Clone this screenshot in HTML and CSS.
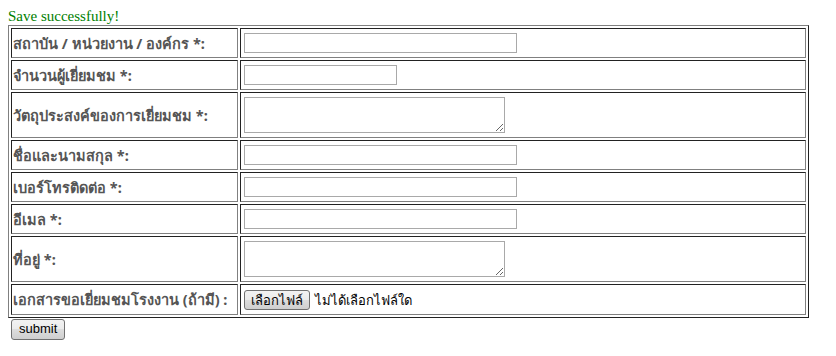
FILE: index.html
```html
<!DOCTYPE html>
<html lang="th">
<head>
  <meta charset="UTF-8">
  <title>ขอเยี่ยมชมโรงงาน</title>
  <link rel="stylesheet" href="styles.css">
</head>
<body>
  <div class="message">Save successfully!</div>
  <form class="visit-form">
    <table class="form-table">
      <tr>
        <td class="label">สถาบัน / หน่วยงาน / องค์กร *:</td>
        <td><input type="text" class="field-long"></td>
      </tr>
      <tr>
        <td class="label">จำนวนผู้เยี่ยมชม *:</td>
        <td><input type="text" class="field-short"></td>
      </tr>
      <tr>
        <td class="label">วัตถุประสงค์ของการเยี่ยมชม *:</td>
        <td><textarea class="field-area"></textarea></td>
      </tr>
      <tr>
        <td class="label">ชื่อและนามสกุล *:</td>
        <td><input type="text" class="field-long"></td>
      </tr>
      <tr>
        <td class="label">เบอร์โทรติดต่อ *:</td>
        <td><input type="text" class="field-long"></td>
      </tr>
      <tr>
        <td class="label">อีเมล *:</td>
        <td><input type="text" class="field-long"></td>
      </tr>
      <tr>
        <td class="label">ที่อยู่ *:</td>
        <td><textarea class="field-area"></textarea></td>
      </tr>
      <tr>
        <td class="label">เอกสารขอเยี่ยมชมโรงงาน (ถ้ามี) :</td>
        <td class="file-cell">
          <button type="button" class="btn">เลือกไฟล์</button>
          <span class="file-name">ไม่ได้เลือกไฟล์ใด</span>
        </td>
      </tr>
    </table>
    <button type="button" class="btn btn-submit">submit</button>
  </form>
</body>
</html>
```

FILE: styles.css
```css
body {
  margin: 8px;
  font-family: "Liberation Serif", "Times New Roman", serif;
  background-color: #FFF;
}

.message {
  color: #008000;
  font-size: 15px;
  line-height: 17px;
}

.form-table {
  width: 801px;
  border-collapse: separate;
  border-spacing: 2px;
  border: 1px solid;
  border-color: #808080 #222 #222 #808080;
}

.form-table td {
  border: 1px solid;
  border-color: #222 #808080 #808080 #222;
  padding: 4px 3px;
  vertical-align: middle;
  line-height: 18px;
}

.form-table td.label {
  width: 223px;
  padding: 4px 1px;
  font-family: Tahoma, "Noto Sans", "Liberation Sans", sans-serif;
  font-size: 14.5px;
  font-weight: bold;
  color: #555;
}

input[type="text"], textarea {
  display: block;
  margin: 0;
  padding: 0;
  border: 1px solid #A9A9A9;
  height: 20px;
  box-sizing: border-box;
  font-size: 13px;
}

.field-long {
  width: 273px;
}

.field-short {
  width: 153px;
}

.field-area {
  width: 261px;
  height: 36px !important;
  resize: both;
}

.file-cell {
  font-family: Tahoma, "Noto Sans", "Liberation Sans", sans-serif;
  font-size: 13px;
}

.btn {
  font-family: Tahoma, "Noto Sans", "Liberation Sans", sans-serif;
  font-size: 13px;
  line-height: 16px;
  height: 20px;
  padding: 0 6px;
  border: 1px solid #707070;
  border-radius: 3px;
  background: linear-gradient(#F2F2F2, #EBEBEB 50%, #DDD 50%, #CFCFCF);
  color: #000;
  cursor: pointer;
  vertical-align: middle;
}

.file-name {
  margin-left: 2px;
  vertical-align: middle;
}

.btn-submit {
  margin: 1px 0 0 3px;
  height: 21px;
  padding: 0 7px;
  font-family: Arial, "Liberation Sans", sans-serif;
}
```
